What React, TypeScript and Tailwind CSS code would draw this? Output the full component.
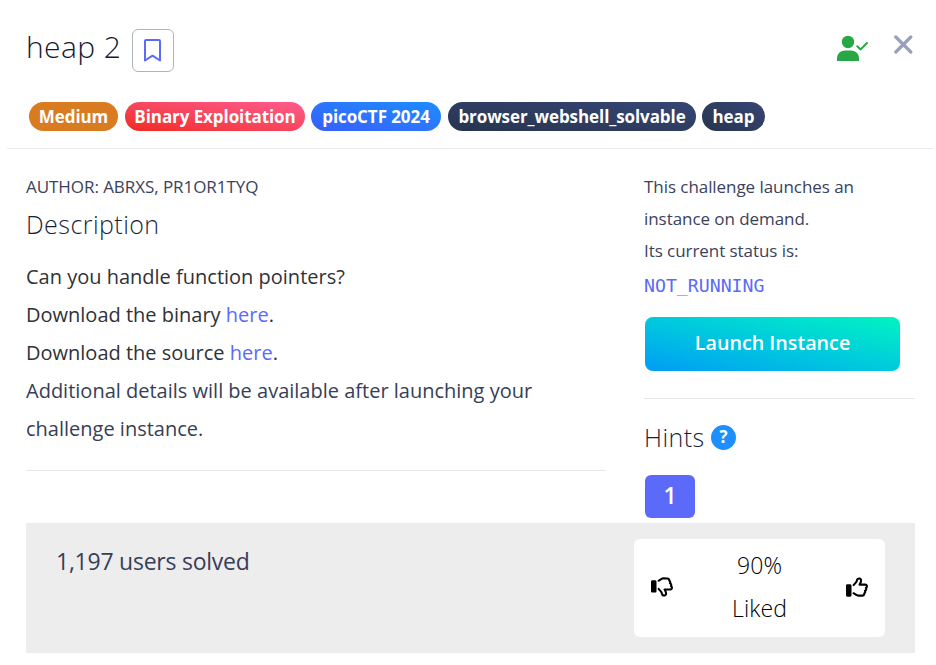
import type { ReactNode } from "react";
import { FaRegThumbsDown, FaRegThumbsUp } from "react-icons/fa6";

function Badge({ className, children }: { className: string; children: ReactNode }) {
  return (
    <span
      className={`flex h-[29px] items-center justify-center rounded-full text-[17px] font-bold tracking-[-0.08px] whitespace-nowrap text-white ${className}`}
    >
      {children}
    </span>
  );
}

function Header() {
  return (
    <header className="ml-[7px] mr-[2px] h-[149px] border-b border-[#e9ecef] pl-[19px] pr-[21px] pt-[29px]">
      <div className="flex h-[43px] justify-between">
        <div className="flex">
          <h1 className="w-[106px] text-[30px] leading-[36px] font-light tracking-[0.4px] whitespace-nowrap text-[#141a35]">heap 2</h1>
          <button className="flex h-[43px] w-[42px] items-center justify-center rounded-md border border-[#adb5bd]">
            <svg width="18" height="24" viewBox="0 0 18 24" fill="none" stroke="#5b6af9" strokeWidth="2" strokeLinejoin="round">
              <path d="M1 2Q1 1 2 1H15Q16 1 16 2V21.5L8.5 16.7L1 21.5Z" />
            </svg>
          </button>
        </div>
        <div className="flex gap-[25px] pt-[6px]">
          <svg width="32" height="27" viewBox="0 0 32 27" fill="#28a745">
            <circle cx="11" cy="7" r="6.2" />
            <path d="M0 26V23.5C0 18.5 4 15.6 8 15.6H14C18 15.6 22 18.5 22 23.5V26Z" />
            <path d="M20.3 11.3L23.6 14.4L30 8" fill="none" stroke="#28a745" strokeWidth="2" strokeLinecap="round" strokeLinejoin="round" />
          </svg>
          <svg width="19" height="19" viewBox="0 0 19 19" stroke="#99a0bf" strokeWidth="3.2" strokeLinecap="round">
            <path d="M1.8 2L16.8 17M16.8 2L1.8 17" />
          </svg>
        </div>
      </div>
      <div className="ml-[3px] mt-[30px] flex">
        <Badge className="mr-[7px] w-[89px] bg-[#d97b20]">Medium</Badge>
        <Badge className="mr-[6px] w-[180px] bg-linear-to-tr from-[#f02818] to-[#ff5b8f]">Binary Exploitation</Badge>
        <Badge className="mr-[7px] w-[130px] bg-linear-to-tr from-[#355efa] to-[#1c8cff]">picoCTF 2024</Badge>
        <Badge className="mr-[6px] w-[248px] bg-linear-to-tr from-[#28344e] to-[#364675]">browser_webshell_solvable</Badge>
        <Badge className="w-[63px] bg-linear-to-tr from-[#28344e] to-[#364675]">heap</Badge>
      </div>
    </header>
  );
}

function Details() {
  return (
    <section className="h-[322px] w-[580px] border-b border-[#e6e7e9]">
      <p className="mt-[22px] text-[17px] leading-[32px] tracking-[-0.06px] text-[#3a425c]">AUTHOR: ABRXS, PR1OR1TYQ</p>
      <h2 className="mt-[6px] text-[25px] leading-[30px] font-light tracking-[0.45px] text-[#181f3a]">Description</h2>
      <div className="mt-[19px] text-[20px] leading-[38px] text-[#303236]">
        <p>Can you handle function pointers?</p>
        <p>
          Download the binary <a className="text-[#5b6af9]">here</a>.
        </p>
        <p>
          Download the source <a className="text-[#5b6af9]">here</a>.
        </p>
        <p className="text-[#363e58]">
          Additional details will be available after launching your
          <br />
          challenge instance.
        </p>
      </div>
    </section>
  );
}

function Sidebar() {
  return (
    <aside className="w-[271px]">
      <div className="pt-[22px] text-[17px] leading-[32px] tracking-[-0.06px] text-[#3a425c]">
        <p>
          This challenge launches an
          <br />
          instance on demand.
        </p>
        <p>Its current status is:</p>
      </div>
      <code className="mt-[3px] block font-['DejaVu_Sans_Mono',monospace] text-[18.2px] leading-[32px] text-[#5b6af9]">
        NOT_RUNNING
      </code>
      <button className="mt-[15px] ml-px flex h-[54px] w-[255px] items-center justify-center rounded-lg bg-linear-to-tr from-[#009cf3] to-[#00f4c0] pb-[2px] text-[19.7px] font-semibold text-white">
        Launch Instance
      </button>
      <hr className="mt-[27px] border-[#e6e7e9]" />
      <div className="mt-[22px] flex h-[32px] items-center">
        <h2 className="w-[67px] text-[25px] leading-[32px] font-light tracking-[0.45px] text-[#181f3a]">Hints</h2>
        <span className="flex size-[25px] items-center justify-center rounded-full bg-[#1e8fff] text-[17px] font-bold text-white">
          ?
        </span>
      </div>
      <button className="mt-[22px] ml-px flex h-[43px] w-[50px] items-center justify-center rounded-md bg-[#5b6af9] pb-[2px] text-[23px] font-semibold text-white">
        1
      </button>
    </aside>
  );
}

function Footer() {
  return (
    <footer className="ml-[26px] mr-[21px] flex h-[130px] justify-between bg-[#ededed] pl-[30px] pr-[30px] pt-[16px]">
      <p className="text-[23px] leading-[45px] tracking-[-0.24px] text-[#363e58]">1,197 users solved</p>
      <div className="flex h-[98px] w-[251px] items-center justify-between rounded-md bg-white px-[17px] pb-[2px] text-black">
        <FaRegThumbsDown className="size-[22px]" />
        <div className="text-center text-[23px] leading-[43px] font-light tracking-[0.1px] text-black">
          <p>90%</p>
          <p>Liked</p>
        </div>
        <FaRegThumbsUp className="size-[22px]" />
      </div>
    </footer>
  );
}

export default function App() {
  return (
    <main className="h-[665px] w-[936px] overflow-hidden bg-white font-['Open_Sans','Noto_Sans',sans-serif]">
      <Header />
      <div className="flex h-[374px] gap-[38px] pl-[26px]">
        <Details />
        <Sidebar />
      </div>
      <Footer />
    </main>
  );
}
